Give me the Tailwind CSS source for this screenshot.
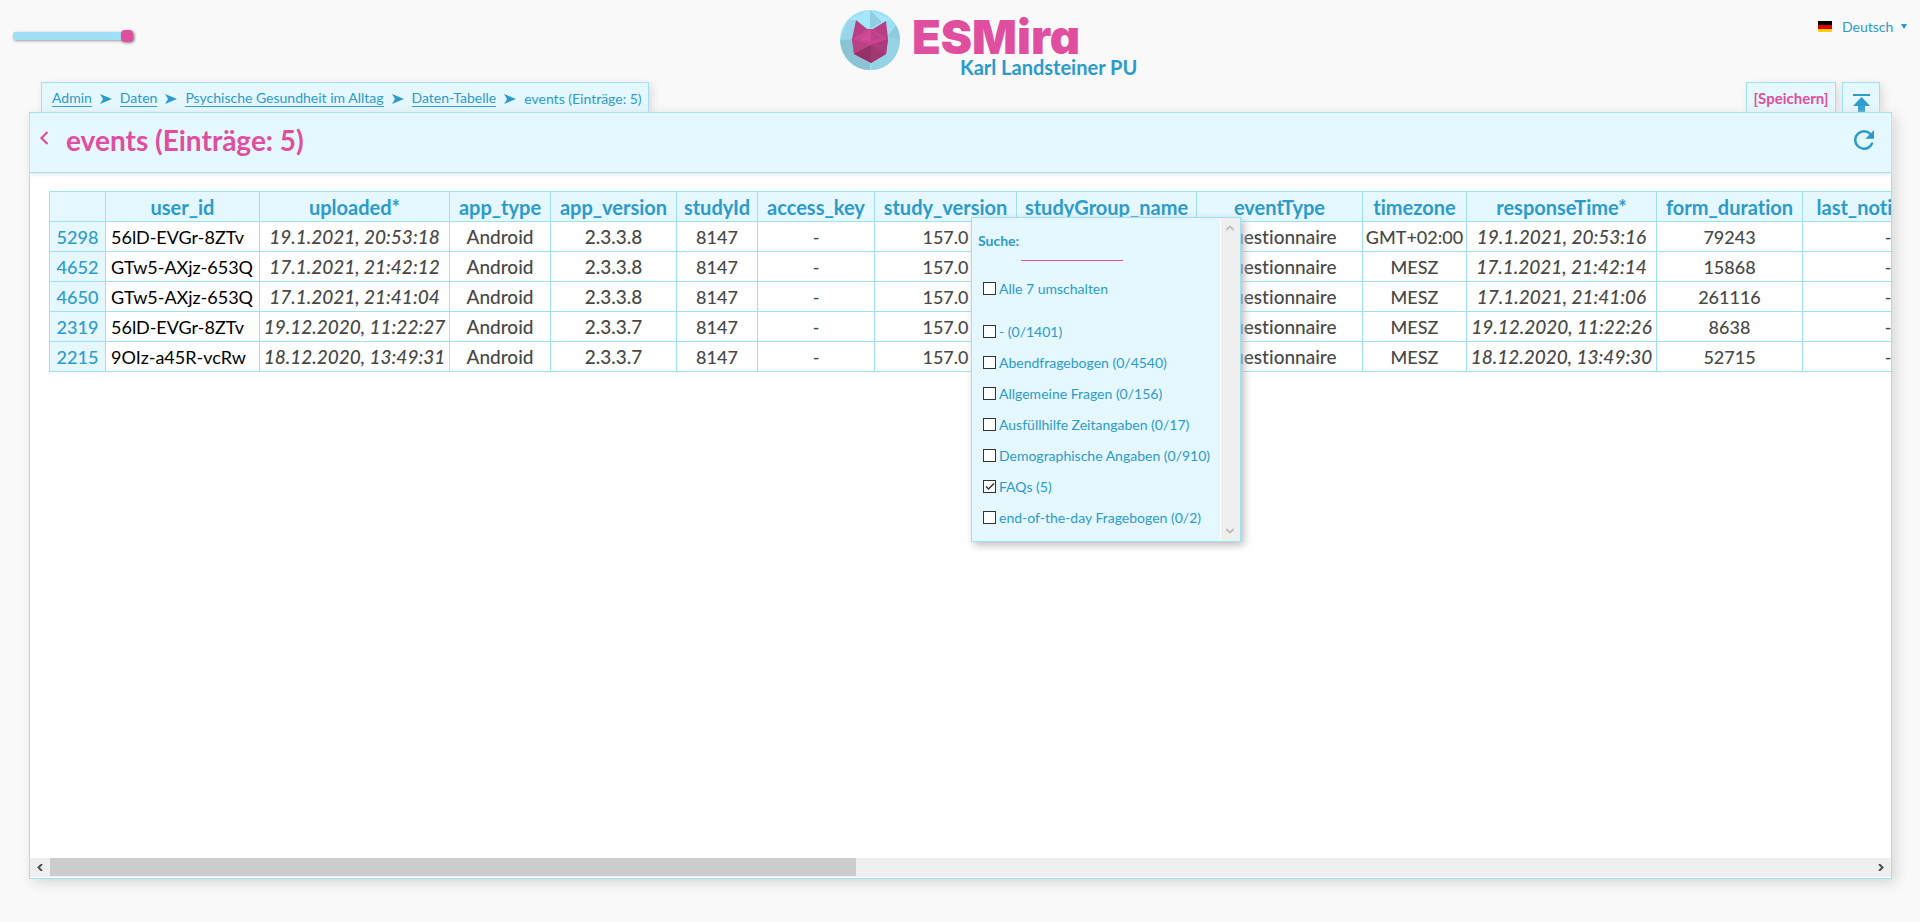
<!DOCTYPE html>
<html lang="de">
<head>
<meta charset="utf-8">
<title>ESMira</title>
<script src="https://cdn.jsdelivr.net/npm/@tailwindcss/browser@4"></script>
</head>
<body class="bg-[#f9f9f9] font-[Lato,sans-serif] text-sm text-[#2b9bcd] [font-variant-ligatures:none]">
<div class="flex min-h-screen flex-col pb-[43px]">

  <header class="grid h-[82px] grid-cols-[1fr_auto_1fr]">
    <div class="pt-[30px] pl-[13px]">
      <input type="range" aria-label="Fortschritt" min="0" max="100" value="100" class="block h-3 w-[120px] appearance-none bg-transparent [&::-webkit-slider-runnable-track]:h-2 [&::-webkit-slider-runnable-track]:rounded-xs [&::-webkit-slider-runnable-track]:bg-[#a0e0f6] [&::-webkit-slider-runnable-track]:shadow-[1px_1px_3px_#999] [&::-webkit-slider-thumb]:-mt-[2px] [&::-webkit-slider-thumb]:h-3 [&::-webkit-slider-thumb]:w-3 [&::-webkit-slider-thumb]:appearance-none [&::-webkit-slider-thumb]:rounded [&::-webkit-slider-thumb]:bg-[#df4e9f] [&::-webkit-slider-thumb]:shadow-[1px_1px_3px_#888]">
    </div>
    <div class="flex w-[240px] gap-3 pt-[10px]">
      <svg class="size-[60px] shrink-0" viewBox="0 0 60 60" aria-hidden="true">
        <circle cx="30" cy="30" r="30" fill="#9fdff4"/>
        <path d="M0 30L12 29L14 44L9 51Q1 43 0 30M14 44L30 53V60Q17 60 9 51" fill="#8bc3d3"/>
        <path d="M0 30L8 10L15 10L12 29Z" fill="#98d5ea"/>
        <path d="M60 30L47 27L46 44L52 51Q59 43 60 30" fill="#98d3e6"/>
        <path d="M60 30L47 27L56 15Q60 22 60 30" fill="#8ecbde"/>
        <path d="M46 44L31 53V60Q43 60 52 51Z" fill="#94d2e6"/>
        <path d="M8 10L30 0L52 10L46 11L30 19L15 10Z" fill="#a5e7fc"/>
        <path d="M30 0V19L42 12Z" fill="#8fcfe1"/>
        <path d="M16 10L27 19H33L46 11L48 29L46 44L31 53L14 44L12 29Z" fill="#b83f85"/>
        <path d="M12 29L28 19H32L48 29L31 35Z" fill="#c9458f"/>
        <path d="M30 20L20 30L31 31Z" fill="#d04b98"/>
        <path d="M31 20V31L42 28Z" fill="#bd4188"/>
        <path d="M12 29L31 35L14 44Z" fill="#ba4086"/>
        <path d="M48 29L31 35L46 44Z" fill="#ad3b7d"/>
        <path d="M14 44L31 35V53Z" fill="#943267"/>
        <path d="M31 35L46 44L31 53Z" fill="#a03871"/>
      </svg>
      <div class="flex flex-col items-start whitespace-nowrap">
        <span class="mt-[9px] mb-[2px] font-[Inter,sans-serif] text-[47px] leading-9 font-black text-[#df4e9f] [font-feature-settings:'cv11']">ESMira</span>
        <span class="ml-12 text-xl leading-5 font-bold">Karl Landsteiner PU</span>
      </div>
    </div>
    <div class="flex items-start justify-end pt-[17px] pr-[9px]">
      <svg class="mt-1 mr-[10px] h-[11px] w-[14px]" viewBox="0 0 14 11" aria-hidden="true"><path d="M0 0h14v4H0z" fill="#000"/><path d="M0 4h14v4H0z" fill="#d00"/><path d="M0 8h14v3H0z" fill="#ffce00"/></svg>
      <label for="lang" class="sr-only">Sprache</label>
      <select id="lang" class="h-5 w-[59px] appearance-none bg-transparent leading-5"><option>Deutsch</option></select>
      <svg class="mt-[7px] mr-1 h-[5px] w-[6px]" viewBox="0 0 6 5" aria-hidden="true"><path d="M0 0H6L3 5Z" fill="currentColor"/></svg>
    </div>
  </header>

  <div class="flex h-[30px] justify-between pr-10 pl-[41px]">
    <nav aria-label="Pfad" class="flex items-center gap-2 border border-b-0 border-[#9fe0f4] bg-[#e5f8ff] pt-[2px] pr-[6px] pl-[10px] shadow-[3px_3px_8px_#ddd]">
      <a href="#" class="border-b border-current leading-4">Admin</a>
      <svg class="h-[10px] w-3" viewBox="0 0 12 10"><path d="M0 0L12 5L0 10L3 5Z" fill="currentColor"/></svg>
      <a href="#" class="border-b border-current leading-4">Daten</a>
      <svg class="h-[10px] w-3" viewBox="0 0 12 10"><path d="M0 0L12 5L0 10L3 5Z" fill="currentColor"/></svg>
      <a href="#" class="border-b border-current leading-4">Psychische Gesundheit im Alltag</a>
      <svg class="h-[10px] w-3" viewBox="0 0 12 10"><path d="M0 0L12 5L0 10L3 5Z" fill="currentColor"/></svg>
      <a href="#" class="border-b border-current leading-4">Daten-Tabelle</a>
      <svg class="h-[10px] w-3" viewBox="0 0 12 10"><path d="M0 0L12 5L0 10L3 5Z" fill="currentColor"/></svg>
      <span>events (Einträge: 5)</span>
    </nav>
    <div class="flex gap-[6px]">
      <button class="w-[90px] border border-b-0 border-[#9fe0f4] bg-[#e5f8ff] pt-[2px] text-[15px] font-bold text-[#df4e9f] shadow-[3px_3px_8px_#ddd]">[Speichern]</button>
      <button aria-label="Nach oben" class="flex w-[38px] items-end justify-center overflow-hidden border border-b-0 border-[#9fe0f4] bg-[#e5f8ff] shadow-[3px_3px_8px_#ddd]">
        <svg class="h-[18px] w-[17px]" viewBox="0 0 17 18"><path d="M0 0h17v2H0zM8.500 3L17 12H12V18H5V12H0Z" fill="currentColor"/></svg>
      </button>
    </div>
  </div>

  <main class="relative mr-7 ml-[29px] flex grow flex-col border border-[#9fe0f4] bg-white shadow-[4px_4px_12px_#d8d8d8]">
    <div class="flex h-[60px] shrink-0 items-start justify-between border-b border-[#9fe0f4] bg-[#e5f8ff] pr-[17px] pl-[9px] shadow-[0_2px_4px_#e8e8e8]">
      <div class="flex items-start">
        <button aria-label="Zurück" class="pt-[18px] text-[#df4e9f]"><svg class="h-[14px] w-[10px]" viewBox="0 0 10 14" fill="none" stroke="currentColor" stroke-width="2.200"><path d="M8.500 1L2.500 7L8.500 13"/></svg></button>
        <h1 class="pt-[7px] pl-[17px] text-[28px] leading-10 font-bold text-[#df4e9f]">events (Einträge: 5)</h1>
      </div>
      <button aria-label="Neu laden" class="pt-[17px]"><svg class="size-5" viewBox="4 4 16 16"><path fill="currentColor" d="M17.650 6.350A7.960 7.960 0 0 0 12 4a8 8 0 1 0 7.730 10h-2.080A6 6 0 1 1 12 6c1.660 0 3.140.69 4.220 1.780L13 11h7V4z"/></svg></button>
    </div>

    <div class="grow overflow-hidden pt-[18px] pl-[19px]">
      <table class="w-[1924px] table-fixed border-collapse text-center text-lg leading-5 text-[#484848] [&_td]:h-[30px] [&_td]:border [&_td]:border-[#9fe0f4] [&_td]:p-0 [&_td]:whitespace-nowrap [&_th]:h-[30px] [&_th]:border [&_th]:border-[#9fe0f4] [&_th]:bg-[#e5f8ff] [&_th]:p-0 [&_th]:whitespace-nowrap [&_th]:text-[#2b9bcd]">
        <colgroup><col class="w-[56px]"><col class="w-[154px]"><col class="w-[190px]"><col class="w-[101px]"><col class="w-[126px]"><col class="w-[81px]"><col class="w-[117px]"><col class="w-[142px]"><col class="w-[180px]"><col class="w-[166px]"><col class="w-[104px]"><col class="w-[190px]"><col class="w-[146px]"><col class="w-[171px]"></colgroup>
        <thead><tr class="text-xl leading-5"><th></th><th>user_id</th><th>uploaded*</th><th>app_type</th><th>app_version</th><th>studyId</th><th>access_key</th><th>study_version</th><th>studyGroup_name</th><th>eventType</th><th>timezone</th><th>responseTime*</th><th>form_duration</th><th>last_notification</th></tr></thead>
        <tbody class="font-medium">
          <tr><th class="font-medium">5298</th><td class="text-left font-normal text-black"><span class="pl-[5px]">56lD-EVGr-8ZTv</span></td><td class="text-[19px] italic">19.1.2021, 20:53:18</td><td class="text-[19px]">Android</td><td class="text-[19px]">2.3.3.8</td><td>8147</td><td>-</td><td>157.0</td><td></td><td class="text-[19px]">questionnaire</td><td>GMT+02:00</td><td class="text-[19px] italic">19.1.2021, 20:53:16</td><td>79243</td><td>-</td></tr>
          <tr><th class="font-medium">4652</th><td class="text-left font-normal text-black"><span class="pl-[5px]">GTw5-AXjz-653Q</span></td><td class="text-[19px] italic">17.1.2021, 21:42:12</td><td class="text-[19px]">Android</td><td class="text-[19px]">2.3.3.8</td><td>8147</td><td>-</td><td>157.0</td><td></td><td class="text-[19px]">questionnaire</td><td>MESZ</td><td class="text-[19px] italic">17.1.2021, 21:42:14</td><td>15868</td><td>-</td></tr>
          <tr><th class="font-medium">4650</th><td class="text-left font-normal text-black"><span class="pl-[5px]">GTw5-AXjz-653Q</span></td><td class="text-[19px] italic">17.1.2021, 21:41:04</td><td class="text-[19px]">Android</td><td class="text-[19px]">2.3.3.8</td><td>8147</td><td>-</td><td>157.0</td><td></td><td class="text-[19px]">questionnaire</td><td>MESZ</td><td class="text-[19px] italic">17.1.2021, 21:41:06</td><td>261116</td><td>-</td></tr>
          <tr><th class="font-medium">2319</th><td class="text-left font-normal text-black"><span class="pl-[5px]">56lD-EVGr-8ZTv</span></td><td class="text-[19px] italic">19.12.2020, 11:22:27</td><td class="text-[19px]">Android</td><td class="text-[19px]">2.3.3.7</td><td>8147</td><td>-</td><td>157.0</td><td></td><td class="text-[19px]">questionnaire</td><td>MESZ</td><td class="text-[19px] italic">19.12.2020, 11:22:26</td><td>8638</td><td>-</td></tr>
          <tr><th class="font-medium">2215</th><td class="text-left font-normal text-black"><span class="pl-[5px]">9OIz-a45R-vcRw</span></td><td class="text-[19px] italic">18.12.2020, 13:49:31</td><td class="text-[19px]">Android</td><td class="text-[19px]">2.3.3.7</td><td>8147</td><td>-</td><td>157.0</td><td></td><td class="text-[19px]">questionnaire</td><td>MESZ</td><td class="text-[19px] italic">18.12.2020, 13:49:30</td><td>52715</td><td>-</td></tr>
        </tbody>
      </table>
    </div>

    <div class="mb-px flex h-[19px] items-center bg-[#efefef] text-[#505050]" aria-hidden="true">
      <div class="flex w-5 justify-center"><svg class="h-[7px] w-[6px]" viewBox="0 0 6 7" fill="none" stroke="currentColor" stroke-width="2"><path d="M5 0L1.500 3.500L5 7"/></svg></div>
      <div class="flex grow self-stretch"><div class="mb-px w-[44.250%] bg-[#cccccc]"></div></div>
      <div class="flex w-5 justify-center"><svg class="h-[7px] w-[6px]" viewBox="0 0 6 7" fill="none" stroke="currentColor" stroke-width="2"><path d="M1 0L4.500 3.500L1 7"/></svg></div>
    </div>

    <!-- Column filter menu -->
    <div class="absolute top-[104px] left-[941px] flex w-[270px] border border-[#9fe0f4] bg-[#e5f8ff] shadow-[3px_3px_8px_#bbb]">
      <form class="grow pt-[13px] pb-2 pl-[6px]">
        <div class="flex gap-[2px]"><label for="q" class="leading-5 font-bold">Suche:</label><input id="q" type="text" class="h-[30px] w-[102px] border-b border-[#df4e9f] bg-transparent outline-none"></div>
        <div class="mt-3 mb-3 flex flex-col [&_input]:size-[13px] [&_input]:appearance-none [&_input]:border [&_input]:border-[#333] [&_input]:bg-white [&_label]:flex [&_label]:h-[31px] [&_label]:items-center [&_label]:gap-[3px] [&_label]:pl-[5px]">
          <label><input type="checkbox">Alle 7 umschalten</label>
        </div>
        <div class="flex flex-col [&_input]:size-[13px] [&_input]:appearance-none [&_input]:border [&_input]:border-[#333] [&_input]:bg-white [&_label]:flex [&_label]:h-[31px] [&_label]:items-center [&_label]:gap-[3px] [&_label]:pl-[5px]">
          <label><input type="checkbox">- (0/1401)</label>
          <label><input type="checkbox">Abendfragebogen (0/4540)</label>
          <label><input type="checkbox">Allgemeine Fragen (0/156)</label>
          <label><input type="checkbox">Ausfüllhilfe Zeitangaben (0/17)</label>
          <label><input type="checkbox">Demographische Angaben (0/910)</label>
          <label class="relative"><input type="checkbox" checked>FAQs (5)<svg class="absolute left-[7px] h-[9px] w-[10px]" viewBox="0 0 10 9" fill="none" stroke="#333" stroke-width="1.500"><path d="M1 4.500L3.500 7L9 1.500"/></svg></label>
          <label><input type="checkbox">end-of-the-day Fragebogen (0/2)</label>
        </div>
      </form>
      <div class="flex w-5 flex-col items-center justify-between border-l border-white bg-[#efefef] py-[7px] pr-[2px] text-[#bdbdbd]" aria-hidden="true">
        <svg class="h-[6px] w-2" viewBox="0 0 8 6" fill="none" stroke="currentColor" stroke-width="2"><path d="M0 5L4 1.500L8 5"/></svg>
        <svg class="h-[6px] w-2" viewBox="0 0 8 6" fill="none" stroke="currentColor" stroke-width="2"><path d="M0 1L4 4.500L8 1"/></svg>
      </div>
    </div>
  </main>
</div>
</body>
</html>
